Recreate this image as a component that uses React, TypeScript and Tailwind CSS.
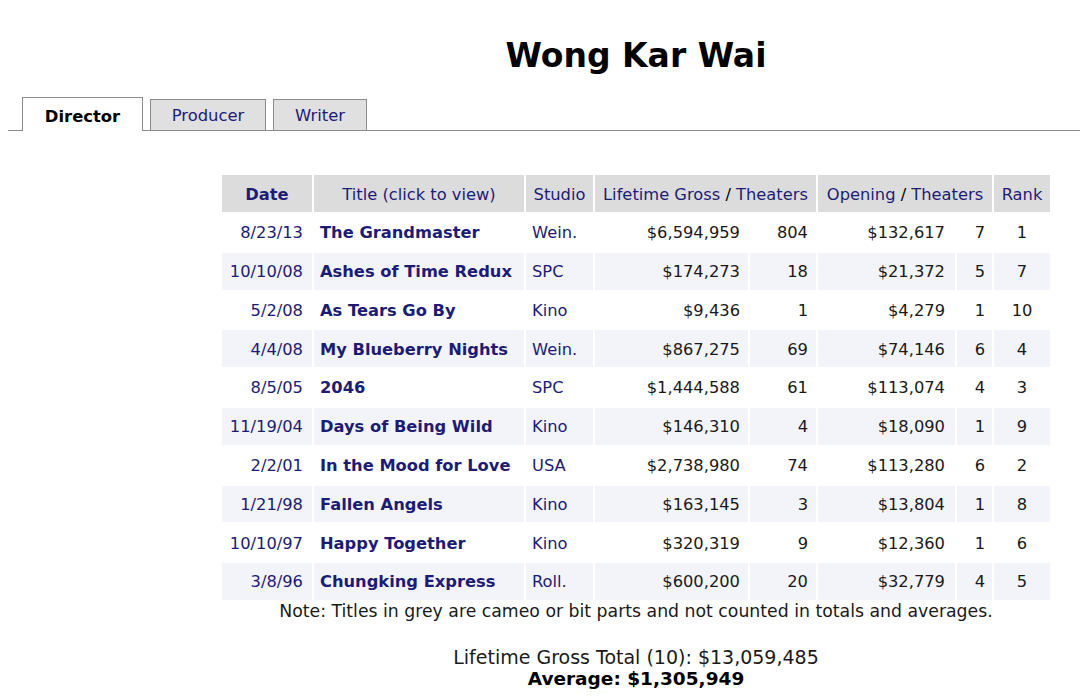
import React from "react";

type Row = {
  date: string;
  title: string;
  studio: string;
  gross: string;
  theaters: string;
  opening: string;
  openTh: string;
  rank: string;
};

const rows: Row[] = [
  { date: "8/23/13", title: "The Grandmaster", studio: "Wein.", gross: "$6,594,959", theaters: "804", opening: "$132,617", openTh: "7", rank: "1" },
  { date: "10/10/08", title: "Ashes of Time Redux", studio: "SPC", gross: "$174,273", theaters: "18", opening: "$21,372", openTh: "5", rank: "7" },
  { date: "5/2/08", title: "As Tears Go By", studio: "Kino", gross: "$9,436", theaters: "1", opening: "$4,279", openTh: "1", rank: "10" },
  { date: "4/4/08", title: "My Blueberry Nights", studio: "Wein.", gross: "$867,275", theaters: "69", opening: "$74,146", openTh: "6", rank: "4" },
  { date: "8/5/05", title: "2046", studio: "SPC", gross: "$1,444,588", theaters: "61", opening: "$113,074", openTh: "4", rank: "3" },
  { date: "11/19/04", title: "Days of Being Wild", studio: "Kino", gross: "$146,310", theaters: "4", opening: "$18,090", openTh: "1", rank: "9" },
  { date: "2/2/01", title: "In the Mood for Love", studio: "USA", gross: "$2,738,980", theaters: "74", opening: "$113,280", openTh: "6", rank: "2" },
  { date: "1/21/98", title: "Fallen Angels", studio: "Kino", gross: "$163,145", theaters: "3", opening: "$13,804", openTh: "1", rank: "8" },
  { date: "10/10/97", title: "Happy Together", studio: "Kino", gross: "$320,319", theaters: "9", opening: "$12,360", openTh: "1", rank: "6" },
  { date: "3/8/96", title: "Chungking Express", studio: "Roll.", gross: "$600,200", theaters: "20", opening: "$32,779", openTh: "4", rank: "5" },
];

export default function App() {
  return (
    <div className="h-[699px] w-[1080px] overflow-hidden bg-white font-['DejaVu_Sans',Verdana,sans-serif] text-black">
      {/* Title */}
      <div className="pl-[192px] pt-[36px]">
        <h1 className="text-center text-[33px] font-bold leading-[40px] text-black">Wong Kar Wai</h1>
      </div>

      {/* Tabs */}
      <div className="ml-[8px] mt-[21px] flex items-end gap-[7px] border-b border-[#8c8c8c] pl-[14px]">
        <div className="relative -mb-px flex h-[34px] w-[121px] items-center justify-center border border-b-0 border-[#8c8c8c] bg-white pt-[6px] text-[16.4px] font-bold">
          Director
        </div>
        <div className="flex h-[31px] w-[116px] items-center justify-center border border-b-0 border-[#8c8c8c] bg-[#e0e0e0] pt-[2px] text-[16.4px] text-[#1c1c78]">
          Producer
        </div>
        <div className="flex h-[31px] w-[94px] items-center justify-center border border-b-0 border-[#8c8c8c] bg-[#e0e0e0] pt-[2px] text-[16.4px] text-[#1c1c78]">
          Writer
        </div>
      </div>

      {/* Table */}
      <div className="mt-[42px] flex justify-center pl-[192px]">
        <table className="w-[832px] table-fixed border-separate border-spacing-[2px] text-[16.3px]">
          <colgroup>
            <col className="w-[90px]" />
            <col className="w-[210px]" />
            <col className="w-[67px]" />
            <col className="w-[153px]" />
            <col className="w-[66px]" />
            <col className="w-[137px]" />
            <col className="w-[35px]" />
            <col className="w-[56px]" />
          </colgroup>
          <thead>
            <tr className="h-[37px] bg-[#dcdcdc] text-[#1c1c78]">
              <th className="pt-[3px] font-bold">Date</th>
              <th className="pt-[3px] font-normal">Title (click to view)</th>
              <th className="pt-[3px] font-normal">Studio</th>
              <th colSpan={2} className="whitespace-nowrap pt-[3px] font-normal">
                Lifetime Gross <span className="text-black">/</span> Theaters
              </th>
              <th colSpan={2} className="whitespace-nowrap pt-[3px] font-normal">
                Opening <span className="text-black">/</span> Theaters
              </th>
              <th className="pt-[3px] font-normal">Rank</th>
            </tr>
          </thead>
          <tbody>
            {rows.map((r, i) => (
              <tr key={r.date + r.title} className={i % 2 === 1 ? "h-[36.8px] bg-[#f3f3fa]" : "h-[36.8px] bg-white"}>
                <td className="whitespace-nowrap pr-[9px] pt-[2px] text-right text-[#1c1c78]">{r.date}</td>
                <td className="whitespace-nowrap pl-[6px] pt-[2px] font-bold text-[#1c1c78]">{r.title}</td>
                <td className="whitespace-nowrap pl-[6px] pt-[2px] text-[#1c1c78]">{r.studio}</td>
                <td className="whitespace-nowrap pr-[8px] pt-[2px] text-right text-[#1a1a1a]">{r.gross}</td>
                <td className="whitespace-nowrap pr-[8px] pt-[2px] text-right text-[#1a1a1a]">{r.theaters}</td>
                <td className="whitespace-nowrap pr-[10px] pt-[2px] text-right text-[#1a1a1a]">{r.opening}</td>
                <td className="whitespace-nowrap pr-[7px] pt-[2px] text-right text-[#1a1a1a]">{r.openTh}</td>
                <td className="whitespace-nowrap pt-[2px] text-center text-[#1a1a1a]">{r.rank}</td>
              </tr>
            ))}
          </tbody>
        </table>
      </div>

      {/* Note + totals */}
      <div className="pl-[192px] text-center">
        <p className="text-[17.3px] leading-[18px] text-[#1a1a1a]">
          Note: Titles in grey are cameo or bit parts and not counted in totals and averages.
        </p>
        <p className="mt-[26px] text-[19px] leading-[22px] text-[#1a1a1a]">Lifetime Gross Total (10): $13,059,485</p>
        <p className="text-[18.5px] font-bold leading-[22px] text-black">Average: $1,305,949</p>
      </div>
    </div>
  );
}
